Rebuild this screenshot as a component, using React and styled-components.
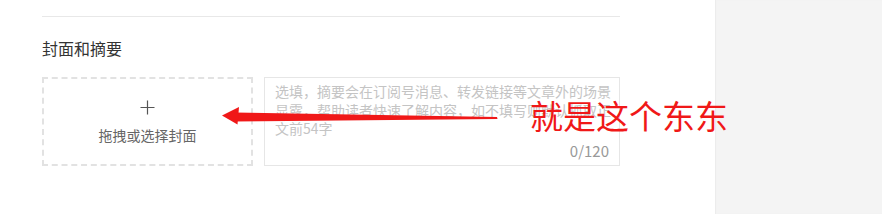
import React from 'react';
import styled, {createGlobalStyle} from 'styled-components';

const GlobalStyle = createGlobalStyle`
    html, body {
        margin: 0;
        padding: 0;
        background: #fff;
        font-family: "Noto Sans CJK SC", "Noto Sans", sans-serif;
    }
`

function App() {
    return (
        <Page>
            <GlobalStyle />
            <Main>
                <Divider />
                <Title>封面和摘要</Title>
                <Row>
                    <CoverDrop>
                        <PlusIcon width="15" height="15" viewBox="0 0 15 15">
                            <path d="M7.5 0.5v14M0.5 7.5h14" stroke="#555" strokeWidth="1.2" fill="none" />
                        </PlusIcon>
                        <CoverText>拖拽或选择封面</CoverText>
                    </CoverDrop>
                    <Digest>
                        <DigestInput placeholder="选填，摘要会在订阅号消息、转发链接等文章外的场景显露，帮助读者快速了解内容，如不填写则默认抓取正文前54字" />
                        <Counter>0/120</Counter>
                    </Digest>
                </Row>
            </Main>
            <Side />
            <Arrow width="290" height="26" viewBox="0 0 290 26">
                <path d="M277 15 L277.5 17 L15 19.5 L15 10.5 Z" fill="#f01818" />
                <path d="M2 13.5 L19 5 L17.5 22.5 Z" fill="#f01818" />
            </Arrow>
            <Note>就是这个东东</Note>
        </Page>
    )
}

export default App

const Page = styled.div`
    position: relative;
    display: flex;
    height: 214px;
    overflow: hidden;
`

const Main = styled.div`
    width: 578px;
    padding: 16px 95px 0 42px;
    background: #fff;
`

const Side = styled.div`
    flex: 1;
    background: #f4f4f4;
    box-shadow: inset 1px 0 1px #ececec;
`

const Divider = styled.div`
    border-top: 1px solid #e8e8e8;
`

const Title = styled.div`
    margin-top: 19px;
    font-size: 16px;
    line-height: 24px;
    color: #333;
`

const Row = styled.div`
    display: flex;
    gap: 11px;
    margin-top: 17px;
`

const CoverDrop = styled.div`
    box-sizing: border-box;
    width: 211px;
    height: 89px;
    border: 2px dashed #e2e2e2;
    display: flex;
    flex-direction: column;
    align-items: center;
    padding-top: 21px;
`

const PlusIcon = styled.svg`
    display: block;
`

const CoverText = styled.div`
    margin-top: 10px;
    font-size: 14px;
    line-height: 20px;
    color: #666;
`

const Digest = styled.div`
    position: relative;
    box-sizing: border-box;
    width: 356px;
    height: 89px;
    border: 1px solid #e6e6e6;
`

const DigestInput = styled.textarea`
    box-sizing: border-box;
    display: block;
    width: 100%;
    height: 62px;
    border: none;
    outline: none;
    resize: none;
    padding: 4px 4px 0 10px;
    font-family: inherit;
    font-size: 14px;
    line-height: 18.5px;
    color: #333;
    overflow: hidden;

    &::placeholder {
        color: #c4c4c4;
    }
`

const Counter = styled.div`
    position: absolute;
    right: 10px;
    bottom: 4px;
    font-size: 15px;
    line-height: 20px;
    color: #999;
`

const Arrow = styled.svg`
    position: absolute;
    left: 220px;
    top: 102px;
`

const Note = styled.div`
    position: absolute;
    left: 530px;
    top: 94px;
    font-size: 33px;
    line-height: 42px;
    color: #f01818;
    white-space: nowrap;
`
